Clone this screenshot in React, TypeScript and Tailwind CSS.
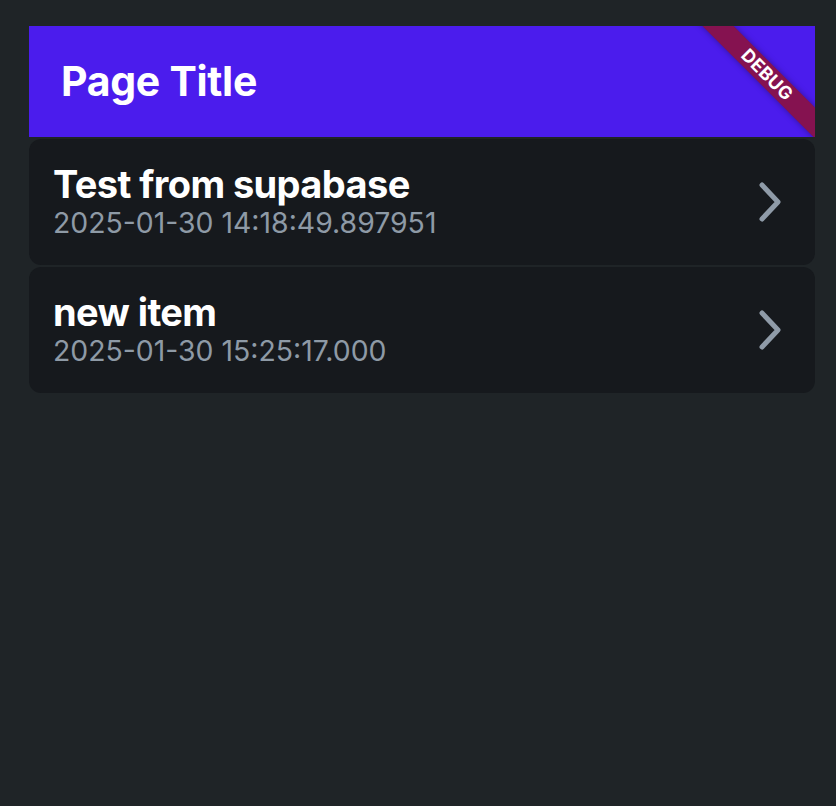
import React from 'react';

const items = [
  { title: 'Test from supabase', date: '2025-01-30 14:18:49.897951' },
  { title: 'new item', date: '2025-01-30 15:25:17.000' },
];

const Chevron = () => (
  <svg width="26" height="42" viewBox="0 0 26 42" fill="none">
    <path d="M5 4 L21 21 L5 38" stroke="#8f9ba8" strokeWidth="5" strokeLinecap="round" strokeLinejoin="round" />
  </svg>
);

export default function App() {
  return (
    <div
      className="min-h-[806px] w-full bg-[#1f2427] pt-[26px] px-[21px]"
      style={{ fontFamily: 'Inter, "Noto Sans", sans-serif' }}
    >
      <div className="flex flex-col gap-[2px] w-[786px] ml-[8px]">
        {/* app bar */}
        <div className="relative h-[111px] bg-[#4b1ced] flex items-center pl-[32px] overflow-hidden">
          <h1 className="text-[41px] font-bold text-white tracking-[-0.3px] leading-none">Page Title</h1>
          <div className="absolute top-[38px] right-[-52px] w-[200px] h-[22px] rotate-45 bg-[#851250] flex items-center justify-center shadow-[0_0_6px_rgba(0,0,0,0.35)]">
            <span className="text-white text-[18px] font-bold tracking-[0.3px] leading-none">DEBUG</span>
          </div>
        </div>

        {/* list */}
        {items.map((item, i) => (
          <div
            key={i}
            className="h-[126px] bg-[#16191d] rounded-[12px] flex items-center justify-between pl-[24px] pr-[32px]"
          >
            <div className="flex flex-col">
              <span className="text-[38px] font-bold text-white tracking-[-0.6px] leading-[42px]">{item.title}</span>
              <span className="text-[28.4px] text-[#8e9aa6] leading-[36px]">{item.date}</span>
            </div>
            <Chevron />
          </div>
        ))}
      </div>
    </div>
  );
}
